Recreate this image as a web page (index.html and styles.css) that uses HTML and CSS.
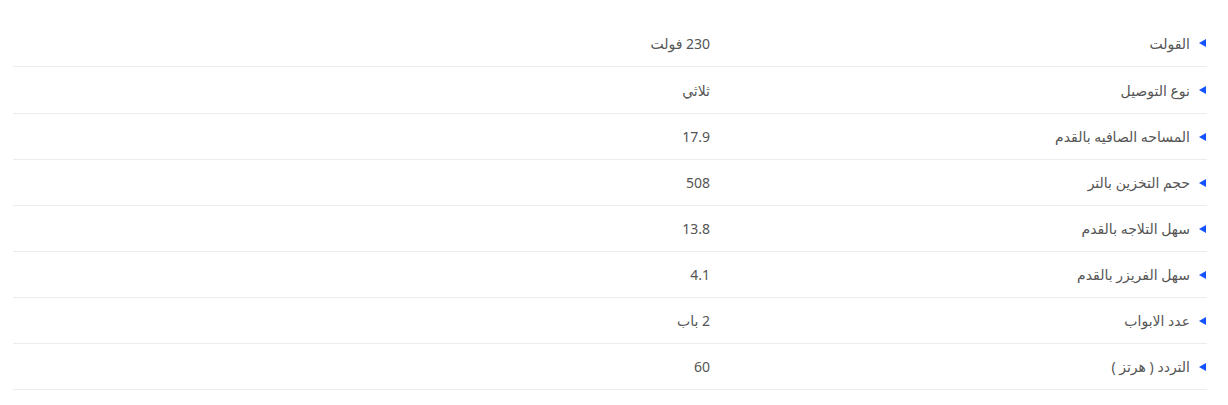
FILE: index.html
```html
<!DOCTYPE html>
<html lang="ar" dir="rtl">
<head>
<meta charset="utf-8">
<link rel="stylesheet" href="styles.css">
</head>
<body>
<div class="specs">
  <div class="row tall"><div class="label"><span class="tri"></span>القولت</div><div class="value">230 فولت</div></div>
  <div class="row tall"><div class="label"><span class="tri"></span>نوع التوصيل</div><div class="value">ثلاثي</div></div>
  <div class="row"><div class="label"><span class="tri"></span>المساحه الصافيه بالقدم</div><div class="value">17.9</div></div>
  <div class="row"><div class="label"><span class="tri"></span>حجم التخزين بالتر</div><div class="value">508</div></div>
  <div class="row"><div class="label"><span class="tri"></span>سهل التلاجه بالقدم</div><div class="value">13.8</div></div>
  <div class="row"><div class="label"><span class="tri"></span>سهل الفريزر بالقدم</div><div class="value">4.1</div></div>
  <div class="row"><div class="label"><span class="tri"></span>عدد الابواب</div><div class="value">2 باب</div></div>
  <div class="row"><div class="label"><span class="tri"></span>التردد ( هرتز )</div><div class="value">60</div></div>
</div>
</body>
</html>
```
FILE: styles.css
```css
html, body {
  margin: 0;
  background: #fff;
}
body {
  font-family: "Noto Sans", "DejaVu Sans", sans-serif;
  font-size: 14px;
  color: #555;
}
.specs {
  direction: rtl;
  padding: 20px 21px 0 13px;
}
.row {
  display: grid;
  grid-template-columns: 497px 1fr;
  height: 45px;
  align-items: center;
  border-bottom: 1px solid #ececec;
}
.row.tall {
  height: 46px;
}
.label {
  display: flex;
  align-items: center;
  gap: 9px;
  padding-right: 1px;
}
.tri {
  width: 0;
  height: 0;
  border-top: 4.5px solid transparent;
  border-bottom: 4.5px solid transparent;
  border-right: 7px solid #1452ff;
}
.value {
  text-align: right;
}
```
